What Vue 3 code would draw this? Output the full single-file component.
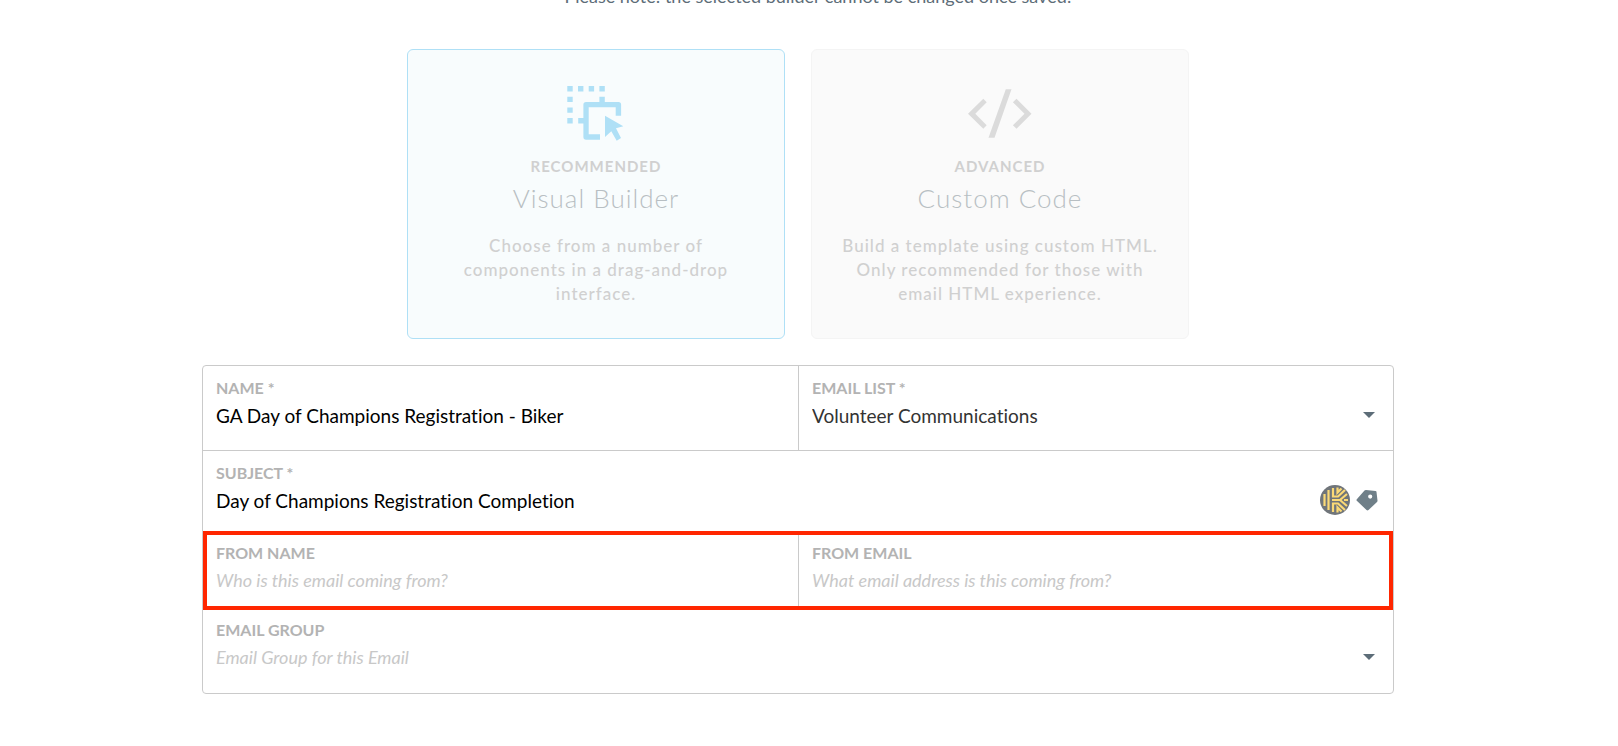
<template>
  <main class="page">
    <p class="note">Please note: the selected builder cannot be changed once saved!</p>

    <div class="builders">
      <button type="button" class="builder selected" disabled>
        <svg class="builder-icon" viewBox="0 0 64 64" fill="currentColor" aria-hidden="true">
          <path d="M3.3 4h5.4v5.4H3.3zM14 4h5.4v5.4H14zM24.7 4h5.4v5.4h-5.4zM35.4 4h5.4v5.4h-5.4zM3.3 14.7h5.4v5.4H3.3zM3.3 25.4h5.4v5.4H3.3zM3.3 36h5.4v5.4H3.3zM35.4 14.7h5.4V21h-5.4zM14.2 36H20v5.4h-5.8z" />
          <path d="M22 20h32.5a2.6 2.6 0 0 1 2.6 2.6v11.1h-5.4v-8.4h-27v27H36v5.4H22a2.6 2.6 0 0 1-2.6-2.6V22.6a2.6 2.6 0 0 1 2.6-2.6z" />
          <path d="M41 33.7l18.3 10.6-7.3 2 5 9.7-4.3 2.7-5.4-9.4-6.3 5.7z" />
        </svg>
        <span class="tag-line">RECOMMENDED</span>
        <span class="title">Visual Builder</span>
        <span class="text">Choose from a number of components in a drag-and-drop interface.</span>
      </button>
      <button type="button" class="builder" disabled>
        <svg class="builder-icon" viewBox="0 0 64 64" fill="currentColor" aria-hidden="true">
          <path d="M15.3 16.7l3.4 3.6L7.3 31.7l11.4 11.6-3.4 3.4L0 31.7zM37.8 7.3h5.7l-17 48.4h-6zM48.5 16.7l15 15-15 15-3.6-3.4 11.6-11.6-11.6-11.4z" />
        </svg>
        <span class="tag-line">ADVANCED</span>
        <span class="title">Custom Code</span>
        <span class="text">Build a template using custom HTML. Only recommended for those with email HTML experience.</span>
      </button>
    </div>

    <form class="form" @submit.prevent>
      <div class="row name-row">
        <div class="field">
          <label for="name">NAME *</label>
          <input id="name" v-model="form.name" type="text">
        </div>
        <div class="field">
          <label for="list">EMAIL LIST *</label>
          <div class="control">
            <select id="list" v-model="form.list">
              <option>Volunteer Communications</option>
            </select>
            <svg class="arrow" viewBox="0 0 12 6" aria-hidden="true"><path d="M0 0h12L6 6z" /></svg>
          </div>
        </div>
      </div>

      <div class="row subject-row">
        <div class="field">
          <label for="subject">SUBJECT *</label>
          <div class="control">
            <input id="subject" v-model="form.subject" type="text">
            <button type="button" class="icon-btn" aria-label="Personalize">
              <svg class="logo" viewBox="0 0 30 30" aria-hidden="true">
                <circle cx="15" cy="15" r="15" fill="#70757a" />
                <g fill="none" stroke="#fbd976" stroke-width="2.200">
                  <path d="M4.500 9v12M8.500 5v20" />
                  <path d="M13 3v8.500h5l7-6.500M17.500 2.500v5l4-4" />
                  <path d="M13 27v-8.500h5l7 6.500M17.500 27.500v-5l4 4" />
                  <path d="M12 15h8l7-6M20 15l7 6M24 15h4" />
                </g>
              </svg>
            </button>
            <button type="button" class="icon-btn" aria-label="Insert tag">
              <svg class="tag" viewBox="0 0 22 22" aria-hidden="true">
                <path fill="#6f7f88" fill-rule="evenodd" d="M10 1l9.500 1a1 1 0 0 1 1 1l1 8.500a2 2 0 0 1-.5 1.500l-8.500 8a1.500 1.500 0 0 1-2 0L.8 11.800a1.200 1.200 0 0 1 0-1.600L8.500 1.500A2 2 0 0 1 10 1zM14.200 5.500a2.100 2.100 0 1 0 0 4.200 2.100 2.100 0 0 0 0-4.200z" />
              </svg>
            </button>
          </div>
        </div>
      </div>

      <div class="row from-row">
        <div class="field">
          <label for="from-name">FROM NAME</label>
          <input id="from-name" v-model="form.fromName" type="text" placeholder="Who is this email coming from?">
        </div>
        <div class="field">
          <label for="from-email">FROM EMAIL</label>
          <input id="from-email" v-model="form.fromEmail" type="email" placeholder="What email address is this coming from?">
        </div>
      </div>

      <div class="row group-row">
        <div class="field">
          <label for="group">EMAIL GROUP</label>
          <div class="control">
            <select id="group" v-model="form.group" :class="{ empty: !form.group }">
              <option value="">Email Group for this Email</option>
            </select>
            <svg class="arrow" viewBox="0 0 12 6" aria-hidden="true"><path d="M0 0h12L6 6z" /></svg>
          </div>
        </div>
      </div>
    </form>
  </main>
</template>

<script setup>
import { reactive } from 'vue'

const form = reactive({
  name: 'GA Day of Champions Registration - Biker',
  list: 'Volunteer Communications',
  subject: 'Day of Champions Registration Completion',
  fromName: '',
  fromEmail: '',
  group: ''
})
</script>

<style>
body {
  margin: 0;
  background: #fff;
  overflow-x: hidden;
}
</style>

<style scoped>
.page {
  max-width: 1192px;
  margin: 0 auto;
  padding-right: 22px;
  font-family: Lato, "Open Sans", sans-serif;
  font-variant-ligatures: none;
}

/* scrolled partly out of view */
.note {
  margin: -16px 0 41px;
  padding-left: 40px;
  color: #5d6d78;
  font-size: 18px;
  line-height: 24px;
  text-align: center;
}

.builders {
  display: flex;
  justify-content: center;
  gap: 26px;
}

.builder {
  box-sizing: border-box;
  display: flex;
  flex-direction: column;
  align-items: center;
  width: 378px;
  padding: 32px 24px;
  border: 1px solid #f4f4f4;
  border-radius: 6px;
  background: #fafafa;
  color: #d0d0d0;
  font-family: inherit;
  text-align: center;
}

.builder.selected {
  padding: 32px 48px;
  border-color: #afe0f6;
  background: #f8fcfd;
}

.builder-icon {
  width: 64px;
  height: 64px;
  color: #dbdbdb;
}

.selected .builder-icon {
  color: #afe0f6;
}

.tag-line {
  margin-top: 10px;
  font-size: 15px;
  font-weight: 700;
  line-height: 20px;
  letter-spacing: 1px;
}

.title {
  margin: 5px 0 19px;
  color: #b8bfc3;
  font-size: 26px;
  font-weight: 300;
  line-height: 34px;
  letter-spacing: 1px;
}

.text {
  font-size: 17px;
  font-weight: 500;
  line-height: 24px;
  letter-spacing: 1px;
}

.form {
  margin-top: 26px;
  border: 1px solid #cacaca;
  border-radius: 4px;
}

.row {
  display: flex;
}

.field {
  box-sizing: border-box;
  flex: 1 1 50%;
  min-width: 0;
  padding: 12px 12px 0 13px;
}

.field + .field {
  border-left: 1px solid #cacaca;
}

.name-row {
  height: 84px;
  border-bottom: 1px solid #cacaca;
}

.subject-row {
  height: 80px;
}

.from-row {
  height: 71px;
  border: 4px solid #ff2600;
}

.from-row .field {
  padding: 8px 9px 0;
}

.from-row .field + .field {
  padding-left: 13px;
}

.group-row {
  height: 83px;
}

.group-row .field {
  padding-top: 10px;
}

label {
  display: block;
  color: #b3b3b3;
  font-size: 16px;
  font-weight: 700;
  line-height: 20px;
}

.control {
  display: flex;
  align-items: center;
  height: 34px;
}

input,
select {
  display: block;
  box-sizing: border-box;
  flex: 1;
  width: 100%;
  min-width: 0;
  height: 34px;
  margin: 0;
  padding: 0;
  border: 0;
  outline: 0;
  background: transparent;
  color: #000;
  font-family: inherit;
  font-size: 19px;
  font-variant-ligatures: inherit;
}

select {
  appearance: none;
  color: #333;
}

input:placeholder-shown,
select.empty {
  font-size: 18px;
}

input::placeholder,
select.empty {
  color: #c8c8c8;
  font-style: italic;
  opacity: 1;
}

.arrow {
  width: 12px;
  height: 6px;
  margin-right: 6px;
  fill: #5d6d78;
}

.icon-btn {
  display: flex;
  margin: 0 3px;
  padding: 0;
  border: 0;
  background: none;
  cursor: pointer;
}

.logo {
  width: 30px;
  height: 30px;
}

.tag {
  width: 22px;
  height: 22px;
}
</style>
